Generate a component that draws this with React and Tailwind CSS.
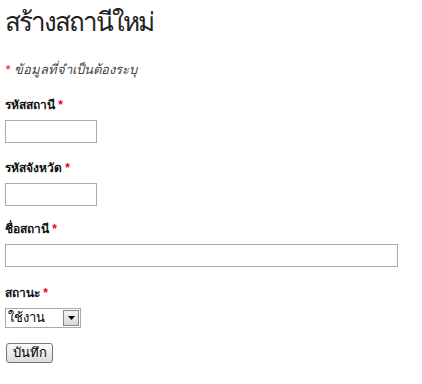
export default function App() {
  return (
    <div className="min-h-screen bg-white px-[5px] pt-[4px] text-[#333]">
      <div className="font-['Liberation_Sans',sans-serif]">
        <h1 className="text-[26px] font-light leading-[36px] tracking-[-2px] text-[#222]">สร้างสถานีใหม่</h1>
        <p className="mt-[21px] text-[13px] italic leading-[18px] text-[#444]">
          <span className="text-red-600">*</span> ข้อมูลที่จำเป็นต้องระบุ
        </p>

        <div className="mt-[17px] flex flex-col">
          <label className="text-[12px] font-bold leading-[18px] text-[#111]">
            รหัสสถานี <span className="text-red-600">*</span>
          </label>
          <input className="mt-[6px] h-[23px] w-[92px] border border-[#aaa] bg-white px-1 text-[13px] outline-none" />
        </div>

        <div className="mt-[16px] flex flex-col">
          <label className="text-[12px] font-bold leading-[18px] text-[#111]">
            รหัสจังหวัด <span className="text-red-600">*</span>
          </label>
          <input className="mt-[6px] h-[23px] w-[92px] border border-[#aaa] bg-white px-1 text-[13px] outline-none" />
        </div>

        <div className="mt-[14px] flex flex-col">
          <label className="text-[12px] font-bold leading-[18px] text-[#111]">
            ชื่อสถานี <span className="text-red-600">*</span>
          </label>
          <input className="mt-[6px] h-[23px] w-[393px] border border-[#aaa] bg-white px-1 text-[13px] outline-none" />
        </div>

        <div className="mt-[17px] flex flex-col">
          <label className="text-[12px] font-bold leading-[18px] text-[#111]">
            สถานะ <span className="text-red-600">*</span>
          </label>
          <div className="mt-[6px] flex h-[20px] w-[76px] items-center border border-[#aaa] bg-white">
            <span className="flex-1 pl-[2px] text-[13px] leading-[18px] text-black">ใช้งาน</span>
            <span className="mr-[1px] flex h-[16px] w-[16px] items-center justify-center border border-[#888] bg-gradient-to-b from-[#f4f4f4] to-[#d8d8d8]">
              <svg width="7" height="4" viewBox="0 0 7 4"><path d="M0 0h7L3.5 4z" fill="#000" /></svg>
            </span>
          </div>
        </div>

        <button className="ml-[1px] mt-[15px] h-[20px] w-[47px] rounded-[3px] border border-[#777] bg-gradient-to-b from-[#fafafa] to-[#dcdcdc] text-[13px] leading-[16px] text-black">
          บันทึก
        </button>
      </div>
    </div>
  );
}
